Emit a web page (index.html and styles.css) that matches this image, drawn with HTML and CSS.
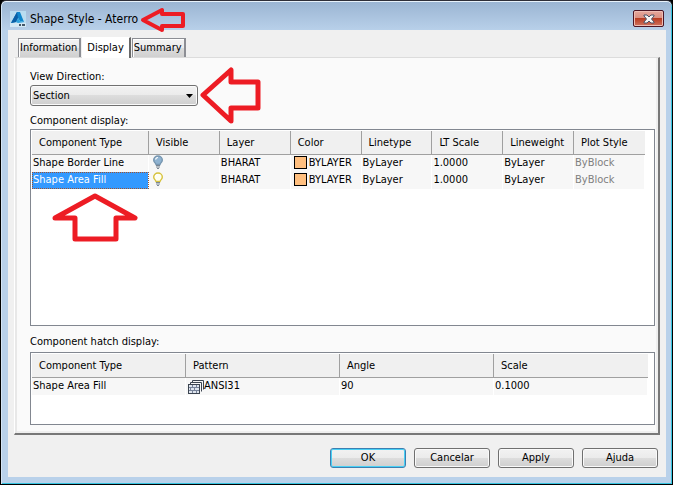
FILE: index.html
```html
<!DOCTYPE html>
<html lang="en">
  <head>
    <meta charset="utf-8">
    <title>Shape Style - Aterro</title>
    <link rel="stylesheet" href="styles.css">
  </head>
  <body>
    <svg width="0" height="0" class="defs">
      <symbol id="bulb" viewBox="0 0 12 15">
        <path d="M4 9.500C4 8 1.700 7.500 1.700 5a4.300 4 0 0 1 8.600 0C10.300 7.500 8 8 8 9.500z" fill="var(--glass)" stroke="var(--rim)" stroke-width="1.400"/>
        <path d="M3.500 4.500q.5-2 2.500-2" fill="none" stroke="#fff" stroke-width="1.200"/>
        <path d="M4 10.500h4M4 12h4M5 13.500h2" stroke="#7b8794" stroke-width="1.200"/>
      </symbol>
    </svg>

    <div class="dialog">
      <div class="titlebar">
        <svg class="logo" width="16" height="16" viewBox="0 0 16 16">
          <rect width="16" height="16" fill="#b9dcf0"/>
          <path d="M0 12h16v4H0z" fill="#d3e9f5"/>
          <path d="M7 1h3l4 10-4-1-2-3-2 4-5 1z" fill="#0f86cc"/>
          <path d="M7 1l1 6-2 4-5 1z" fill="#0a5fa6"/>
          <path d="M8 7l2 3 4 1-6 1-2-1z" fill="#2ea3dd"/>
          <path d="M9 14h2M12 14h3" stroke="#45586a" stroke-width="2"/>
        </svg>
        <span class="caption">Shape Style - Aterro</span>
        <button class="close" aria-label="Close">
          <svg width="12" height="10" viewBox="0 0 12 10">
            <path d="M1 1h3l2 2 2-2h3v1L8.500 5 11 8v1H8L6 7 4 9H1V8l2.500-3L1 2z" fill="#f4f4f4" stroke="#4c5267"/>
          </svg>
        </button>
        <svg class="arrow arrow-title" width="50" height="30" viewBox="0 0 50 30">
          <path d="M4 14L23 4v4h21v12H23v4z"/>
        </svg>
      </div>

      <div class="client">
        <div class="tabs" role="tablist">
          <button class="tab" role="tab">Information</button>
          <button class="tab active" role="tab" aria-selected="true">Display</button>
          <button class="tab" role="tab">Summary</button>
        </div>

        <div class="panel" role="tabpanel">
          <label class="label" for="direction">View Direction:</label>
          <div class="direction">
            <select id="direction">
              <option>Section</option>
            </select>
            <svg class="caret" width="7" height="4" viewBox="0 0 7 4"><path d="M0 0h7L3.500 4z"/></svg>
            <svg class="arrow arrow-direction" width="64" height="60" viewBox="0 0 64 60">
              <path d="M4 30L32 5v12h27v26H32v13z"/>
            </svg>
          </div>

          <div class="label" id="component-label">Component display:</div>
          <div class="list components">
            <table aria-labelledby="component-label">
              <colgroup><col class="type"><col span="7"></colgroup>
              <thead>
                <tr>
                  <th>Component Type</th>
                  <th>Visible</th>
                  <th>Layer</th>
                  <th>Color</th>
                  <th>Linetype</th>
                  <th>LT Scale</th>
                  <th>Lineweight</th>
                  <th>Plot Style</th>
                </tr>
              </thead>
              <tbody>
                <tr>
                  <td>Shape Border Line</td>
                  <td><svg class="bulb off" width="12" height="15"><use href="#bulb"/></svg></td>
                  <td>BHARAT</td>
                  <td><span class="swatch"></span>BYLAYER</td>
                  <td>ByLayer</td>
                  <td>1.0000</td>
                  <td>ByLayer</td>
                  <td class="disabled">ByBlock</td>
                </tr>
                <tr>
                  <td class="selected">Shape Area Fill</td>
                  <td><svg class="bulb on" width="12" height="15"><use href="#bulb"/></svg></td>
                  <td>BHARAT</td>
                  <td><span class="swatch"></span>BYLAYER</td>
                  <td>ByLayer</td>
                  <td>1.0000</td>
                  <td>ByLayer</td>
                  <td class="disabled">ByBlock</td>
                </tr>
              </tbody>
            </table>
            <svg class="arrow arrow-fill" width="90" height="52" viewBox="0 0 90 52">
              <path d="M44 4L84 26H65v21H24V26H4z"/>
            </svg>
          </div>

          <div class="label" id="hatch-label">Component hatch display:</div>
          <div class="list hatch">
            <table aria-labelledby="hatch-label">
              <thead>
                <tr>
                  <th>Component Type</th>
                  <th>Pattern</th>
                  <th>Angle</th>
                  <th>Scale</th>
                </tr>
              </thead>
              <tbody>
                <tr>
                  <td>Shape Area Fill</td>
                  <td><svg class="pattern" width="16" height="14" viewBox="0 0 16 14" fill="none" stroke="#3c4450">
                    <path d="M4.500 2.500V.500h11v9M2.500 4.500v-2h11v9"/>
                    <rect x=".5" y="4.500" width="11" height="9" fill="#dfe5ee"/>
                    <path d="M1 7.500h10M1 10.500h10M4.500 5v2M8.500 5v2M6.500 8v2M2.500 8v2M4.500 11v2M8.500 11v2" stroke="#77839a"/>
                  </svg>ANSI31</td>
                  <td>90</td>
                  <td>0.1000</td>
                </tr>
              </tbody>
            </table>
          </div>
        </div>

        <div class="buttons">
          <button class="button default">OK</button>
          <button class="button">Cancelar</button>
          <button class="button">Apply</button>
          <button class="button">Ajuda</button>
        </div>
      </div>
    </div>
  </body>
</html>
```
FILE: styles.css
```css
* { box-sizing: border-box; }

body {
  margin: 0;
  background: #000;
  color: #000;
  font: 11px/14px "DejaVu Sans Condensed", Tahoma, sans-serif;
}

button, select { font: inherit; color: inherit; }

.defs { position: absolute; }

/* window frame */
.dialog {
  display: flex;
  flex-direction: column;
  min-height: 100vh;
  padding: 0 6px 7px;
  border: 1px solid #000;
  border-top-color: #2e2e38;
  border-radius: 6px 6px 0 0;
  background: linear-gradient(#9ab4d2, #b9d1ea 30px);
  box-shadow: inset 0 1px #e8f2fb, inset 1px 0 #d5e5f5, inset -1px -1px #35c4e0;
}

.titlebar {
  position: relative;
  display: flex;
  align-items: center;
  height: 29px;
  padding: 0 3px;
}

.caption {
  flex: 1;
  margin: 6px 0 0 4px;
  font-size: 12px;
}

.logo { margin-top: 6px; }

.close {
  display: flex;
  align-items: center;
  justify-content: center;
  width: 31px;
  height: 17px;
  margin-top: 6px;
  margin-right: -1px;
  padding: 0;
  border: 1px solid #4b1524;
  border-radius: 2px;
  background: linear-gradient(#e6a79c, #d98f81 48%, #b93c22 50%, #cf7460);
  box-shadow: inset 0 0 0 1px #eebdb4;
}

.client {
  display: flex;
  flex: 1;
  flex-direction: column;
  margin-left: 1px;
  padding: 7px 6px 9px 6px;
  background: #f0f0f0;
}

/* tabs */
.tabs {
  display: flex;
  align-items: flex-end;
  gap: 1px;
  padding-left: 4px;
}

.tab {
  height: 19px;
  padding: 0 2px 0 1px;
  border: 1px solid #8c8e94;
  border-right-width: 2px;
  border-bottom: 0;
  background: linear-gradient(#f3f3f3, #ebebeb 50%, #dcdcdc 50%, #d0d0d0);
  box-shadow: inset 1px 1px #fff;
  white-space: nowrap;
}

.tab.active {
  position: relative;
  height: 21px;
  margin-bottom: -1px;
  padding: 0 5px 1px 4px;
  border-color: #fff #696969 #fff #fff;
  background: #fff;
}

.panel {
  display: flex;
  flex: 1;
  flex-direction: column;
  padding: 12px 3px 8px 15px;
  border: 1px solid #fff;
  border-top-color: #dcdcdc;
  border-right: 2px solid #787878;
  border-bottom: 2px solid #787878;
  background: #fafafa;
  box-shadow: inset 2px 0 #e8e8e8, inset -2px -2px #efefef;
}

.label { display: block; }

.direction {
  position: relative;
  width: 168px;
  margin: 1px 0 8px;
}

.direction select {
  display: block;
  appearance: none;
  width: 100%;
  height: 21px;
  padding: 0 2px;
  border: 1px solid #707070;
  border-radius: 3px;
  background: linear-gradient(#f2f2f2, #ebebeb 50%, #dddddd 50%, #cfcfcf);
  box-shadow: inset 0 0 0 1px #fafafa;
}

.caret {
  position: absolute;
  top: 9px;
  right: 5px;
  pointer-events: none;
}

/* lists */
.list {
  position: relative;
  margin-bottom: 9px;
  padding: 1px;
  border: 1px solid #828790;
  background: #fff;
}

.components {
  flex: 1;
  min-height: 120px;
  margin-top: 1px;
}

.hatch {
  min-height: 73px;
  margin: 3px 0 0;
}

table {
  width: calc(100% - 8px);
  border-collapse: separate;
  border-spacing: 0;
  table-layout: fixed;
}

.hatch table { width: calc(100% - 5px); }

.type { width: 117px; }

th {
  height: 24px;
  padding: 1px 0 0 7px;
  border-right: 1px solid #a0a0a0;
  border-bottom: 1px solid #a0a0a0;
  background: #f0f0f0;
  font-weight: normal;
  text-align: left;
  white-space: nowrap;
}

th:last-child { border-right: 0; }

td {
  height: 17px;
  padding: 0 0 2px 1px;
  border-right: 1px solid #fff;
  background: #f7f7f7;
  background-clip: padding-box;
  white-space: nowrap;
}

.selected {
  outline: 1px dotted #a0522d;
  outline-offset: -1px;
  background-color: #3399ff;
  color: #fff;
}

.disabled { color: #808080; }

.swatch {
  display: inline-block;
  width: 13px;
  height: 13px;
  margin: 0 2px -3px 2px;
  border: 1px solid #000;
  background: #ffbf7f;
}

.bulb {
  display: block;
  margin-left: 2px;
}

.bulb.off { --glass: #8fb3d1; --rim: #7796b0; }
.bulb.on { --glass: #fffff0; --rim: #d6c23c; }

.pattern {
  margin: 0 0 -5px 1px;
}

/* dialog buttons */
.buttons {
  display: flex;
  justify-content: flex-end;
  gap: 8px;
  padding: 13px 2px 0 0;
}

.button {
  width: 76px;
  height: 20px;
  padding: 0;
  border: 1px solid #707070;
  border-radius: 3px;
  background: linear-gradient(#f2f2f2, #ebebeb 50%, #dddddd 50%, #cfcfcf);
  box-shadow: inset 0 0 0 1px #fafafa;
}

.button.default {
  border-color: #3c7fb1;
  box-shadow: inset 0 0 0 1px #48d0f5;
}

/* red callout arrows */
.arrow {
  position: absolute;
  z-index: 1;
  pointer-events: none;
}

.arrow path {
  fill: none;
  stroke: #ed1c24;
  stroke-width: 5;
  stroke-linejoin: round;
}

.arrow-title { top: 5px; left: 132px; }
.arrow-title path { stroke-width: 4; }
.arrow-direction { top: -20px; left: 169px; }
.arrow-fill { top: 62px; left: 20px; }
```
